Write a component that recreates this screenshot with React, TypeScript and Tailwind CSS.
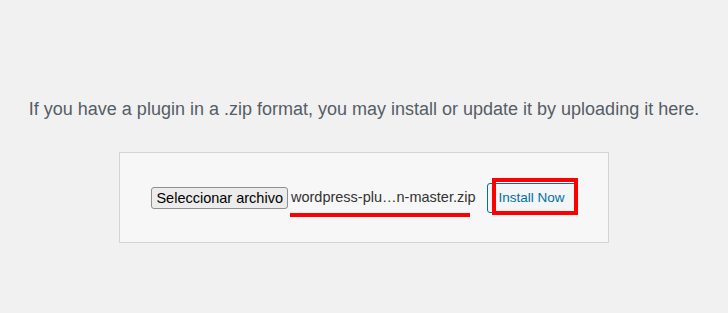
export default function App() {
  return (
    <div className="flex h-[313px] w-full flex-col items-center bg-[#f1f1f1] font-['Liberation_Sans',Arial,sans-serif]">
      <p className="mt-[98px] text-[18px] leading-[22px] text-[#555d66]">
        If you have a plugin in a .zip format, you may install or update it by uploading it here.
      </p>

      <div className="mt-[32px] flex h-[91px] w-[490px] items-center justify-center border border-[#d4d4d4] bg-[#f7f7f7]">
        <div className="flex items-center">
          <button
            type="button"
            className="h-[22px] rounded-[3px] border border-[#8f8f8f] bg-[#ececec] px-[4px] text-[14.5px] leading-[20px] text-black"
          >
            Seleccionar archivo
          </button>
          <span className="relative ml-[3px] text-[14.5px] text-[#333]">
            wordpress-plu…n-master.zip
            <span className="absolute left-[-1px] top-[26px] h-[4px] w-[180px] bg-[#ff0000]" />
          </span>
          <span className="relative ml-[11px]">
            <button
              type="button"
              className="h-[30px] rounded-[3px] border border-[#0071a1] bg-[#f3f5f6] px-[11px] text-[13.5px] leading-[28px] text-[#0071a1]"
            >
              Install Now
            </button>
            <span className="absolute left-[5px] top-[-5px] h-[37px] w-[86px] border-[4px] border-[#ff0000]" />
          </span>
        </div>
      </div>
    </div>
  );
}
